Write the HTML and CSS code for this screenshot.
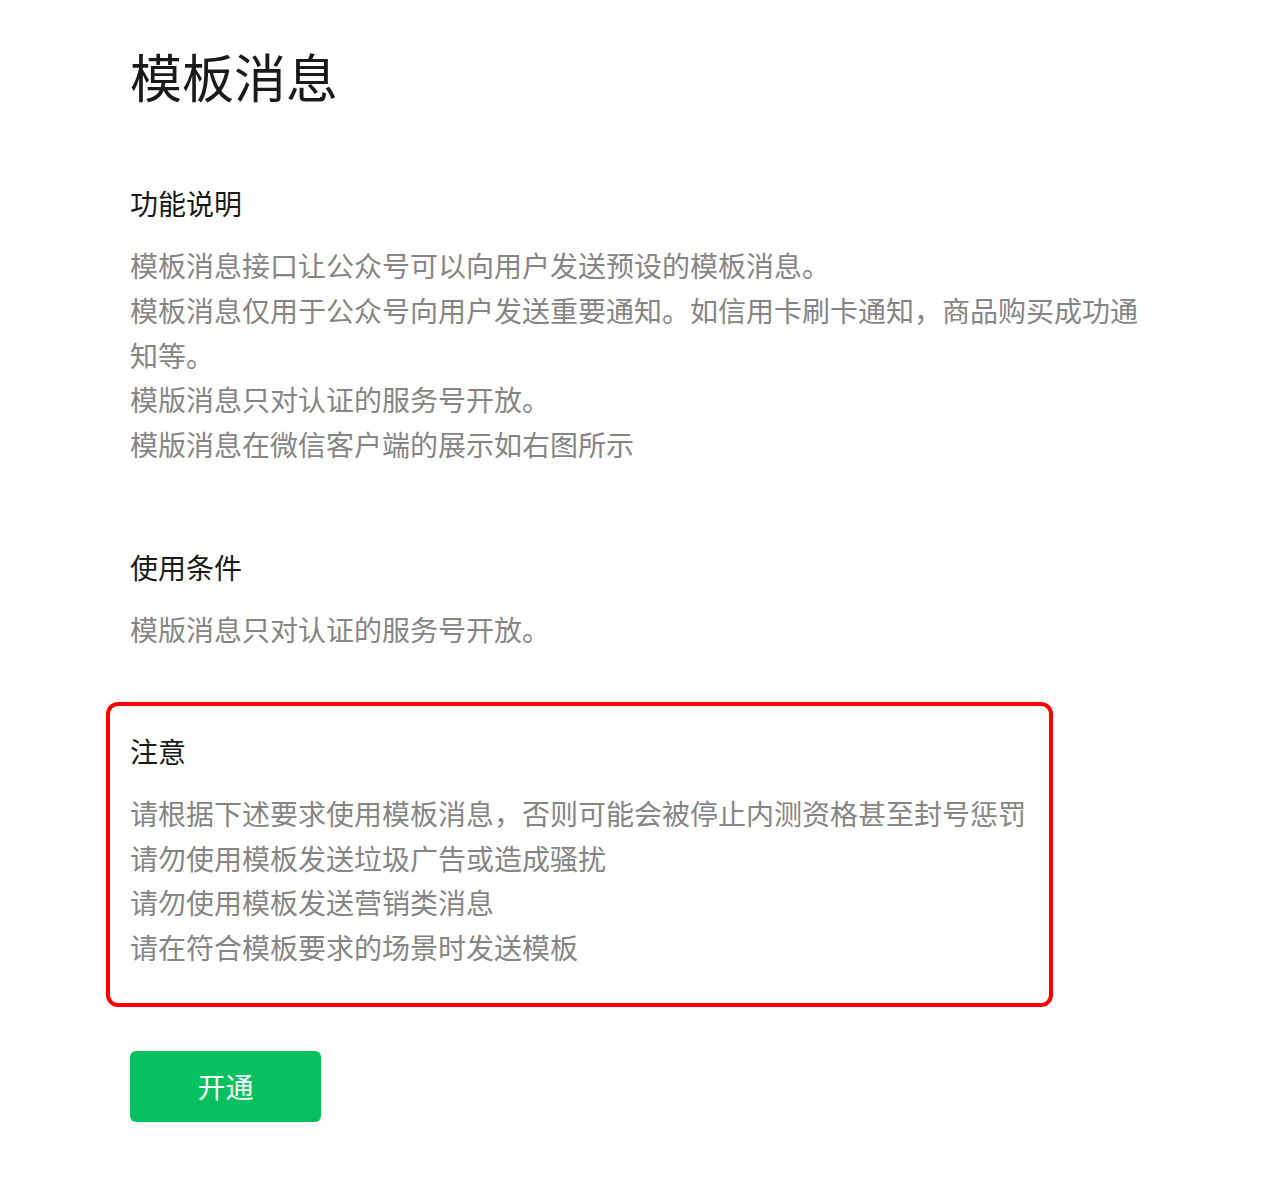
FILE: index.html
```html
<!DOCTYPE html>
<html lang="zh-CN">
<head>
<meta charset="utf-8">
<title>模板消息</title>
<link rel="stylesheet" href="styles.css">
</head>
<body>
<main class="page">
  <h1 class="title">模板消息</h1>

  <section class="section">
    <h2 class="section-title">功能说明</h2>
    <div class="section-body">
      <p>模板消息接口让公众号可以向用户发送预设的模板消息。</p>
      <p>模板消息仅用于公众号向用户发送重要通知。如信用卡刷卡通知，商品购买成功通知等。</p>
      <p>模版消息只对认证的服务号开放。</p>
      <p>模版消息在微信客户端的展示如右图所示</p>
    </div>
  </section>

  <section class="section section-cond">
    <h2 class="section-title">使用条件</h2>
    <div class="section-body">
      <p>模版消息只对认证的服务号开放。</p>
    </div>
  </section>

  <section class="section notice">
    <h2 class="section-title notice-title">注意</h2>
    <div class="section-body">
      <p>请根据下述要求使用模板消息，否则可能会被停止内测资格甚至封号惩罚</p>
      <p>请勿使用模板发送垃圾广告或造成骚扰</p>
      <p>请勿使用模板发送营销类消息</p>
      <p>请在符合模板要求的场景时发送模板</p>
    </div>
  </section>

  <button class="btn-primary" type="button">开通</button>
</main>
</body>
</html>
```

FILE: styles.css
```css
html, body {
  margin: 0;
  padding: 0;
  background: #ffffff;
}

body {
  font-family: "Noto Sans CJK SC", "Noto Sans", "Liberation Sans", sans-serif;
  color: #1a1a1a;
}

.page {
  padding: 40px 0 0 130px;
  width: 1020px;
}

.title {
  margin: 0 0 71px;
  font-size: 52px;
  line-height: 72px;
  font-weight: 400;
  color: #1a1a1a;
}

.section-title {
  margin: 0 0 19px;
  font-size: 28px;
  line-height: 41px;
  font-weight: 400;
  color: #1a1a1a;
}

.section-body p {
  margin: 0;
  font-size: 28px;
  line-height: 44.8px;
  color: #858585;
}

.section-cond {
  margin-top: 80px;
}

.notice {
  margin-top: 50px;
  margin-left: -24px;
  width: 947px;
  box-sizing: border-box;
  border: 4px solid #ff0000;
  border-radius: 12px;
  padding: 25px 20px 33px 20px;
}

.notice-title {
  margin-bottom: 19px;
}

.btn-primary {
  display: block;
  margin-top: 44px;
  width: 191px;
  height: 71px;
  border: 0;
  border-radius: 6px;
  background: #07c160;
  color: #ffffff;
  font-family: inherit;
  font-size: 28px;
  line-height: 71px;
  padding: 0;
  cursor: pointer;
}
```
